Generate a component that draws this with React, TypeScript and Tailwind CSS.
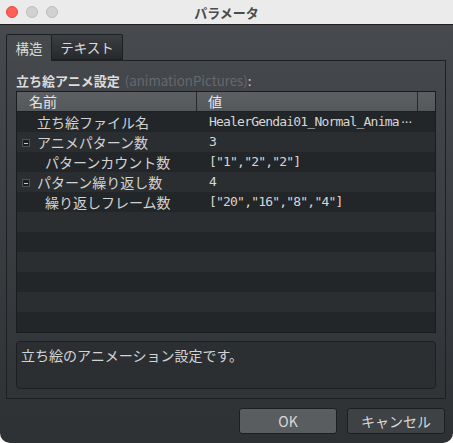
import React from "react";

type Row = {
  name: string;
  value: string;
  level: number;
  toggle?: boolean;
  more?: boolean;
};

const rows: Row[] = [
  { name: "立ち絵ファイル名", value: "HealerGendai01_Normal_Anima", level: 0, more: true },
  { name: "アニメパターン数", value: "3", level: 0, toggle: true },
  { name: "パターンカウント数", value: '["1","2","2"]', level: 1 },
  { name: "パターン繰り返し数", value: "4", level: 0, toggle: true },
  { name: "繰り返しフレーム数", value: '["20","16","8","4"]', level: 1 },
];

const jp = "font-['Noto_Sans_CJK_JP',sans-serif]";
const mono = "font-['DejaVu_Sans_Mono',monospace]";

const MinusBox = () => (
  <span className="absolute left-[5px] top-[7px] w-[8px] h-[8px] bg-[#1b1d1f] border border-[#505356] flex items-center justify-center">
    <span className="w-[4px] h-px bg-[#c8c8c8]" />
  </span>
);

const App: React.FC = () => {
  const empty = Array.from({ length: 6 });

  return (
    <div className={`w-[453px] h-[443px] bg-white ${jp}`}>
      <div className="w-full h-full flex flex-col rounded-b-[10px] overflow-hidden bg-gradient-to-b from-[#484b4f] to-[#2e3134]">
        {/* title bar */}
        <div className="relative h-[25px] shrink-0 bg-[#ebebeb] border-b border-[#1f1f1f] flex items-center justify-center">
          <div className="absolute left-[6px] top-[6px] flex gap-[8px]">
            <span className="w-[12px] h-[12px] rounded-full bg-[#fe5f57] border border-[#e14942]" />
            <span className="w-[12px] h-[12px] rounded-full bg-[#d1d1d1] border border-[#bdbdbd]" />
            <span className="w-[12px] h-[12px] rounded-full bg-[#d1d1d1] border border-[#bdbdbd]" />
          </div>
          <span className="text-[13px] font-bold text-[#4b4b4b] leading-none">パラメータ</span>
        </div>

        <div className="flex-1 flex flex-col px-[6px] pt-[9px]">
          {/* tabs */}
          <div className="flex h-[26px] relative z-10">
            <div className="w-[46px] h-[27px] bg-[#46494c] border border-b-0 border-[#1d1f21] rounded-t-[2px] flex items-center justify-center text-[13.5px] text-[#d8d8d8]">
              構造
            </div>
            <div className="w-[71px] h-[26px] bg-gradient-to-b from-[#3c3f42] to-[#27292c] border border-l-0 border-[#1d1f21] rounded-tr-[2px] flex items-center justify-center text-[13.5px] text-[#dadada]">
              テキスト
            </div>
          </div>

          {/* panel */}
          <div className="w-[440px] h-[339px] border border-[#1d1f21] flex flex-col pl-[9px] pr-[9px]">
            <div className="h-[30px] pt-[10px] leading-[20px] flex items-center whitespace-nowrap">
              <span className="text-[13px] font-bold text-[#dcdcdc]">立ち絵アニメ設定</span>
              <span className="text-[13.3px] text-[#66696d] ml-[5px]">(animationPictures)</span>
              <span className="text-[13.3px] text-[#c8c8c8]">:</span>
            </div>

            {/* table */}
            <div className="w-[420px] h-[242px] border border-[#1a1c1e] flex flex-col">
              <div className="h-[20px] shrink-0 flex bg-gradient-to-b from-[#5d6063] to-[#55585b] border-b border-[#1c1e20] text-[14px] text-[#e4e4e4] leading-[19px]">
                <div className="w-[180px] pl-[12px] border-r border-[#26282a]">名前</div>
                <div className="w-[221px] pl-[11px] border-r border-[#26282a]">値</div>
                <div className="flex-1" />
              </div>
              {rows.map((r, i) => (
                <div
                  key={r.name}
                  className={`h-[20px] flex leading-[20px] ${i % 2 === 0 ? "bg-[#232629]" : "bg-[#2b2e31]"}`}
                >
                  <div className="relative w-[180px] text-[14px] text-[#d2d2d2] whitespace-nowrap">
                    {r.toggle && <MinusBox />}
                    <span className={r.level === 0 ? "pl-[20px]" : "pl-[28px]"}>{r.name}</span>
                  </div>
                  <div className={`flex-1 pl-[12px] text-[13px] tracking-[-0.8px] text-[#d6d6d6] whitespace-nowrap ${mono}`}>
                    {r.value}
                    {r.more && <span className="tracking-[-3px] ml-[1px] text-[11px]">···</span>}
                  </div>
                </div>
              ))}
              {empty.map((_, i) => (
                <div
                  key={i}
                  className={`h-[20px] ${(i + rows.length) % 2 === 0 ? "bg-[#232629]" : "bg-[#2b2e31]"}`}
                />
              ))}
            </div>

            {/* description */}
            <div className="mt-[8px] w-[420px] h-[48px] rounded-[4px] border border-[#1c1e20] bg-[#2c2f32] pl-[4px] pt-[3px] text-[14px] leading-[20px] text-[#d4d4d4]">
              立ち絵のアニメーション設定です。
            </div>
          </div>

          {/* buttons */}
          <div className="flex justify-end gap-[10px] mt-[9px] -mr-[6px] pr-[8px]">
            <button className="w-[98px] h-[26px] rounded-[3px] border border-[#1c1e20] bg-[#5a5d60] text-[14px] text-[#d8d8d8] leading-none">
              OK
            </button>
            <button className="w-[98px] h-[26px] rounded-[3px] border border-[#1c1e20] bg-[#3f4245] text-[14px] text-[#d8d8d8] leading-none">
              キャンセル
            </button>
          </div>
        </div>
      </div>
    </div>
  );
};

export default App;
